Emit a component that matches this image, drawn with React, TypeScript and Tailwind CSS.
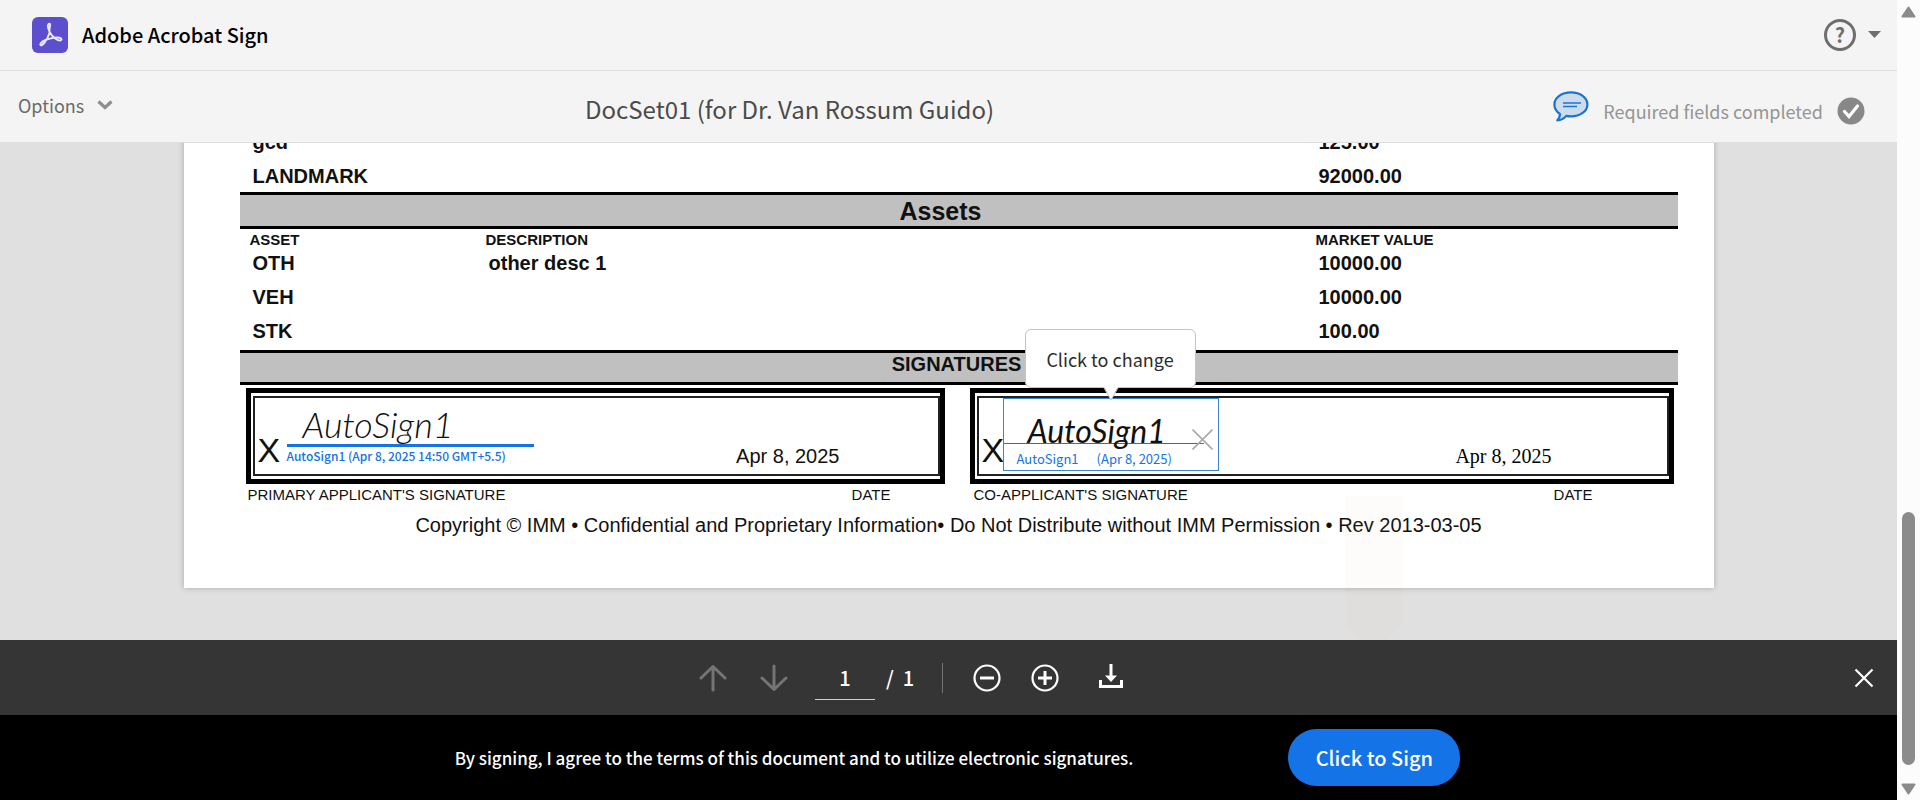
import { ReactNode } from 'react'
import { clsx } from 'clsx'

const liabilities = [
  { name: 'gcd', value: '125.00' },
  { name: 'LANDMARK', value: '92000.00' },
]

const assets = [
  { name: 'OTH', description: 'other desc 1', value: '10000.00' },
  { name: 'VEH', description: '', value: '10000.00' },
  { name: 'STK', description: '', value: '100.00' },
]

const AcrobatLogo = () => (
  <svg viewBox="0 0 36 36" className="w-9 h-9" aria-hidden="true">
    <rect width="36" height="36" rx="6" fill="#5c4fcd" />
    <path
      d="M17.4 6.8c-2.3 0-1.7 4.4.3 8.4-1.300 4.200-3.400 8.200-5.200 10.500-1.500 1.900-3.300 3-4 2.300-1-1 1-3.300 4.600-4.800 3.100-1.300 6.700-2.200 9.800-2.600 3.500-.4 6.600.1 6.600 1.700 0 1.800-3.400 1.500-6.200-.7-2.500-1.900-4.600-4.300-5.700-6.700-1.200-2.700 2-8.100-.2-8.100z"
      fill="none"
      stroke="#ece9ff"
      strokeWidth="1.9"
      strokeLinejoin="round"
    />
  </svg>
)

const CommentIcon = () => (
  <svg viewBox="0 0 36 31" className="w-9 h-[31px]" aria-hidden="true">
    <path
      d="M18 1.400c9.200 0 16.400 5.200 16.400 12S27.200 25.400 18 25.400c-1.700 0-3.300-.2-4.800-.5-2.200 2.700-5.300 4.300-8.900 4.500 1.800-1.800 2.700-3.900 2.600-6.600C3.500 20.600 1.400 17.300 1.400 13.400c0-6.800 7.300-12 16.600-12z"
      fill="#cddcec"
      stroke="#1b73d0"
      strokeWidth="2.2"
      strokeLinejoin="round"
    />
    <path d="M10 12h18M10 15.500h14" stroke="#1b73d0" strokeWidth="1.400" />
  </svg>
)

const DoneIcon = () => (
  <svg viewBox="0 0 28 28" className="w-7 h-7" aria-hidden="true">
    <circle cx="14" cy="14" r="13.500" fill="#888" />
    <path
      d="M7.500 14.500l4.500 5 8.500-10.500"
      fill="none"
      stroke="#fff"
      strokeWidth="3.200"
      strokeLinecap="round"
    />
  </svg>
)

const Header = () => (
  <header className="flex items-center justify-between h-[71px] pl-8 pr-4 pb-px border-b border-[#dedede]">
    <div className="flex items-center gap-[14px]">
      <AcrobatLogo />
      <span className="text-[20px] leading-6 font-medium text-black">
        Adobe Acrobat Sign
      </span>
    </div>
    <button type="button" aria-label="Help" className="flex items-center gap-3">
      <span className="flex items-center justify-center w-8 h-8 rounded-full border-[3px] border-[#6e6e6e] text-[20px] leading-5 font-bold text-[#6e6e6e]">
        ?
      </span>
      <svg viewBox="0 0 13 7" className="w-[13px] h-[7px]">
        <path d="M0 0h13L6.500 7z" fill="#6e6e6e" />
      </svg>
    </button>
  </header>
)

const Toolbar = () => (
  <div className="flex items-center h-[72px] pl-[18px] pr-8 border-b border-[#dedede]">
    <div className="w-[567px] pb-1">
      <button
        type="button"
        className="flex items-center gap-[13px] text-[18px] leading-6 text-[#6b6b6b]">
        Options
        <svg viewBox="0 0 16 10" className="w-4 h-[10px]">
          <path
            d="M1.500 1.500L8 7.500l6.500-6"
            fill="none"
            stroke="#8e8e8e"
            strokeWidth="3.200"
          />
        </svg>
      </button>
    </div>
    <h1 className="flex-1 pt-1 text-[24px] leading-8 text-[#4b4b4b]">
      DocSet01 (for Dr. Van Rossum Guido)
    </h1>
    <div className="flex items-center gap-[14px] text-[18px] leading-6 text-[#959595]">
      <CommentIcon />
      <span className="pt-2">Required fields completed</span>
      <span className="pt-2">
        <DoneIcon />
      </span>
    </div>
  </div>
)

const Cell = ({ first, children }: { first: boolean; children?: ReactNode }) => (
  <td className={clsx('pl-[13px]', !first && 'pt-[10px]')}>{children}</td>
)

const Columns = () => (
  <colgroup>
    <col className="w-[236px]" />
    <col className="w-[830px]" />
    <col />
  </colgroup>
)

const SignatureBox = ({ children }: { children: ReactNode }) => (
  <div className="h-24 border-[5px] border-black pl-[2px] py-[3px]">
    <div className="flex h-full border-2 border-[#222] pl-[3px]">
      <span className="w-[21px] pt-[34px] text-[34px] leading-9">X</span>
      {children}
    </div>
  </div>
)

const SignatureField = () => (
  <div className="relative w-[216px] h-[73px] border border-[#3a86cc] bg-white">
    <button type="button" className="block w-full text-left">
      <span className="block w-[200px] h-[45px] pt-4 pl-6 border-b border-[#1473e6] font-['Lato'] text-[32px] leading-8 italic">
        AutoSign1
      </span>
      <span className="flex gap-[18px] pt-[3px] pl-[13px] text-[13px] leading-6 text-[#1473e6]">
        <span>AutoSign1</span>
        <span>(Apr 8, 2025)</span>
      </span>
    </button>
    <button
      type="button"
      aria-label="Clear signature"
      className="absolute top-[30px] right-[5px]">
      <svg viewBox="0 0 21 21" className="w-[21px] h-[21px]">
        <path d="M.5.5l20 20M20.500.5l-20 20" stroke="#a9a9a9" strokeWidth="1.600" />
      </svg>
    </button>
    <div
      role="tooltip"
      className="absolute left-[21px] bottom-[82px] w-[171px] h-[59px] rounded-md border border-[#c4c4c4] bg-white text-center text-[18px] leading-[58px] text-[#2c2c2c] whitespace-nowrap">
      Click to change
      <svg viewBox="0 0 16 14" className="absolute left-[77px] top-[57px] w-4 h-[14px]">
        <path d="M1 0l7 13 7-13z" fill="#fff" />
        <path d="M1 1l7 12 7-12" fill="none" stroke="#c4c4c4" />
      </svg>
    </div>
  </div>
)

const DocumentPage = () => (
  <article className="relative w-full max-w-[1530px] mx-auto pl-14 pr-9 pb-[51px] bg-white shadow-[0_0_6px_rgba(0,0,0,0.25)] font-['Liberation_Sans'] text-[20px] leading-6 text-[#111]">
    <table className="w-full table-fixed mb-1 text-left font-bold">
      <Columns />
      <tbody>
        {liabilities.map((row, i) => (
          <tr key={row.name}>
            <Cell first={i === 0}>{row.name}</Cell>
            <Cell first={i === 0} />
            <Cell first={i === 0}>{row.value}</Cell>
          </tr>
        ))}
      </tbody>
    </table>
    <h2 className="h-[37px] pr-9 border-y-[3px] border-black bg-[#c0c0c0] text-center text-[25px] leading-8 font-bold">
      Assets
    </h2>
    <table className="w-full table-fixed mb-[7px] text-left font-bold">
      <Columns />
      <thead className="text-[15px] leading-[22px]">
        <tr>
          <th className="pl-[10px]">ASSET</th>
          <th className="pl-[10px]">DESCRIPTION</th>
          <th className="pl-[10px]">MARKET VALUE</th>
        </tr>
      </thead>
      <tbody>
        {assets.map((row, i) => (
          <tr key={row.name}>
            <Cell first={i === 0}>{row.name}</Cell>
            <Cell first={i === 0}>{row.description}</Cell>
            <Cell first={i === 0}>{row.value}</Cell>
          </tr>
        ))}
      </tbody>
    </table>
    <h2 className="h-[35px] pr-1 border-y-[3px] border-black bg-[#c0c0c0] text-center leading-[22px] font-bold">
      SIGNATURES
    </h2>
    <div className="grid grid-cols-[699fr_704fr] gap-x-[25px] pt-[3px] pl-[6px] pr-1">
      <SignatureBox>
        <div className="w-[247px] ml-[8px]">
          <div className="h-[49px] pt-2 pl-4 border-b-[3px] border-[#1473e6] font-['Lato'] text-[36px] leading-9 font-light italic">
            AutoSign1
          </div>
          <div className="font-['Noto_Sans_CJK_SC'] text-[12px] leading-[18px] font-medium text-[#1473e6]">
            AutoSign1 (Apr 8, 2025 14:50 GMT+5.5)
          </div>
        </div>
        <span className="ml-auto pt-[46px] pr-[98px]">Apr 8, 2025</span>
      </SignatureBox>
      <SignatureBox>
        <div className="font-['Noto_Sans_CJK_SC']">
          <SignatureField />
        </div>
        <span className="ml-auto pt-[46px] pr-[115px] font-['Liberation_Serif'] text-black">
          Apr 8, 2025
        </span>
      </SignatureBox>
      <div className="flex justify-between pl-[2px] pr-[54px] text-[15px] leading-[22px]">
        <span>PRIMARY APPLICANT'S SIGNATURE</span>
        <span>DATE</span>
      </div>
      <div className="flex justify-between pl-1 pr-[81px] text-[15px] leading-[22px]">
        <span>CO-APPLICANT'S SIGNATURE</span>
        <span>DATE</span>
      </div>
    </div>
    <p className="pt-[7px] pr-5 text-center">
      Copyright © IMM • Confidential and Proprietary Information• Do Not
      Distribute without IMM Permission • Rev 2013-03-05
    </p>
    {/* fading "next field" flag */}
    <svg
      viewBox="0 0 58 144"
      className="absolute right-[311px] -bottom-[52px] w-[58px] h-36"
      aria-hidden="true">
      <path d="M0 0h58v128L43 144H15L0 128z" fill="#d0a878" fillOpacity="0.04" />
    </svg>
  </article>
)

const ViewerControls = () => (
  <div className="flex items-center h-[75px] pl-[691px] pr-[22px] bg-[#353535] text-white">
    <div className="flex flex-1 items-center">
      <button type="button" aria-label="Previous page" className="w-11 flex justify-center">
        <svg viewBox="0 0 28 28" className="w-7 h-7" fill="none" stroke="#757575" strokeWidth="3" strokeLinecap="round" strokeLinejoin="round">
          <path d="M14 26V2.500M2 14L14 2.500 26 14" />
        </svg>
      </button>
      <button type="button" aria-label="Next page" className="w-11 ml-[17px] flex justify-center">
        <svg viewBox="0 0 28 28" className="w-7 h-7" fill="none" stroke="#757575" strokeWidth="3" strokeLinecap="round" strokeLinejoin="round">
          <path d="M14 2v23.500M2 14l12 11.500L26 14" />
        </svg>
      </button>
      <input
        aria-label="Page number"
        defaultValue="1"
        className="w-[60px] h-11 ml-[19px] border-b border-[#d0d0d0] bg-transparent text-center text-[20px] font-medium"
      />
      <span className="ml-[11px] text-[20px] leading-6 font-medium whitespace-pre">/  1</span>
      <span className="w-px h-[30px] ml-7 bg-[#757575]" />
      <button type="button" aria-label="Zoom out" className="ml-[30px]">
        <svg viewBox="0 0 28 28" className="w-7 h-7" fill="none" stroke="#fff">
          <circle cx="14" cy="14" r="12.500" strokeWidth="2.200" />
          <path d="M7 14h14" strokeWidth="3" />
        </svg>
      </button>
      <button type="button" aria-label="Zoom in" className="ml-[30px]">
        <svg viewBox="0 0 28 28" className="w-7 h-7" fill="none" stroke="#fff">
          <circle cx="14" cy="14" r="12.500" strokeWidth="2.200" />
          <path d="M7 14h14M14 7v14" strokeWidth="3" />
        </svg>
      </button>
      <button type="button" aria-label="Download" className="ml-10">
        <svg viewBox="0 0 24 28" className="w-6 h-7">
          <path d="M10.500 0h3v11.500H18L12 18l-6-6.500h4.500z" fill="#fff" />
          <path d="M1.500 16v6.500h21V16" fill="none" stroke="#fff" strokeWidth="3" />
        </svg>
      </button>
    </div>
    <button type="button" aria-label="Close toolbar">
      <svg viewBox="0 0 22 22" className="w-[22px] h-[22px]">
        <path d="M2.500 2.500l17 17M19.500 2.500l-17 17" stroke="#fff" strokeWidth="2.200" />
      </svg>
    </button>
  </div>
)

const Consent = () => (
  <footer className="flex items-center justify-center gap-[155px] h-[85px] pl-[18px] bg-black text-white">
    <p className="text-[17px] leading-6 font-medium">
      By signing, I agree to the terms of this document and to utilize
      electronic signatures.
    </p>
    <button
      type="button"
      className="w-[172px] h-[57px] rounded-full bg-[#1473e6] text-[20px] leading-6 font-medium">
      Click to Sign
    </button>
  </footer>
)

const Scrollbar = () => (
  <div className="flex flex-col items-center w-[23px] pt-[6px] pb-[5px] bg-[#fcfcfc]" aria-hidden="true">
    <svg viewBox="0 0 15 12" className="w-[15px] h-3">
      <path d="M7.500 1.500L13.500 10.500h-12z" fill="#8b8b8b" stroke="#8b8b8b" strokeWidth="2" strokeLinejoin="round" />
    </svg>
    <div className="flex-1" />
    <div className="w-[13px] h-[253px] mb-[18px] rounded-full bg-[#8b8b8b]" />
    <svg viewBox="0 0 15 12" className="w-[15px] h-3">
      <path d="M7.500 10.500L13.500 1.500h-12z" fill="#8b8b8b" stroke="#8b8b8b" strokeWidth="2" strokeLinejoin="round" />
    </svg>
  </div>
)

const App = () => (
  <div className="flex h-screen bg-[#f4f4f4] font-['Noto_Sans_CJK_SC',sans-serif]">
    <div className="flex flex-col flex-1 min-w-0">
      <Header />
      <Toolbar />
      <main className="flex flex-col justify-end flex-1 min-h-0 overflow-hidden pb-[52px] bg-[#e0e0e0]">
        <DocumentPage />
      </main>
      <ViewerControls />
      <Consent />
    </div>
    <Scrollbar />
  </div>
)

export default App
